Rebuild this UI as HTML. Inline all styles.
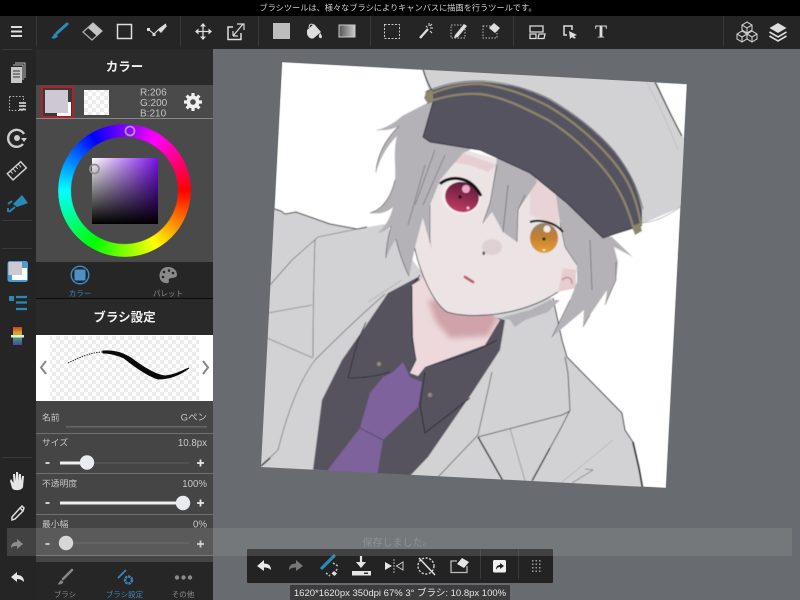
<!DOCTYPE html>
<html lang="ja"><head><meta charset="utf-8"><title>MediBang Paint</title>
<style>
html,body{margin:0;padding:0;width:800px;height:600px;overflow:hidden;background:#686c70}
svg{position:absolute;left:0;top:0}
#ui{filter:blur(.25px)}
text{font-family:"Liberation Sans","Noto Sans CJK JP",sans-serif}
#wheel{position:absolute;left:58px;top:124px;width:133px;height:133px;border-radius:50%;
background:conic-gradient(from 90deg,#f00,#ff0 60deg,#0f0 120deg,#0ff 180deg,#00f 240deg,#f0f 300deg,#f00 360deg);
-webkit-mask:radial-gradient(circle,transparent 53px,#000 54px,#000 66px,transparent 67px);mask:radial-gradient(circle,transparent 53px,#000 54px,#000 66px,transparent 67px)}
#sq{position:absolute;left:92px;top:158px;width:66px;height:66px;background:linear-gradient(to top,#000,rgba(0,0,0,0)),linear-gradient(to right,#fff,#7a10e8)}
</style></head><body>
<svg width="800" height="600" viewBox="0 0 800 600">
<defs>
<clipPath id="cv"><polygon points="282,62 687,84 666,488 261,467"/></clipPath>
<filter id="sf"><feGaussianBlur stdDeviation="0.4"/></filter>
<filter id="sb" x="-30%" y="-30%" width="160%" height="160%"><feGaussianBlur stdDeviation="3"/></filter>
<pattern id="chk" width="8" height="8" patternUnits="userSpaceOnUse"><rect width="8" height="8" fill="#fff"/><rect width="4" height="4" fill="#ececec"/><rect x="4" y="4" width="4" height="4" fill="#ececec"/></pattern>
<linearGradient id="ir1" x1="0" y1="0" x2="0" y2="1"><stop offset="0" stop-color="#5a1c3e"/><stop offset="1" stop-color="#c23a62"/></linearGradient>
<linearGradient id="ir2" x1="0" y1="0" x2="0" y2="1"><stop offset="0" stop-color="#8e8468"/><stop offset=".5" stop-color="#c8802c"/><stop offset="1" stop-color="#e2a13c"/></linearGradient>
</defs>
<rect width="800" height="600" fill="#686c70"/>
<g clip-path="url(#cv)" filter="url(#sf)">
<polygon points="282,62 687,84 666,488 261,467" fill="#fff"/>
<!-- hat crown -->
<path d="M421,66 L655,78 C664,100 680,132 690,150 L690,203 L642,224 L600,170 L500,100 L432,100 C428,88 424,76 421,66Z" fill="#d2d2d4"/>
<path d="M423,69 C426,80 430,88 434,94" fill="none" stroke="#222" stroke-width="1.200"/>
<path d="M655,82 C664,100 672,118 682,136" fill="none" stroke="#222" stroke-width="1.200"/>
<path d="M646,82 C660,105 672,135 678,150" fill="none" stroke="#b0b0b0" stroke-width=".5"/>
<path d="M642,223 C655,222 670,215 684,204" fill="none" stroke="#999" stroke-width=".6"/>
<!-- jacket -->
<path d="M273,208 L281,211 L285,214 L296,212 L330,224 L357,229 L385,224 L420,270 L500,312 L540,298 L552,298 L562,340 L567,357 L622,413 L625,430 L633,442 L643,490 L255,470Z" fill="#d2d2d4"/>
<path d="M272,208 L281,211 L285,214 L296,212 L330,224 L357,229 L367,227" fill="none" stroke="#222" stroke-width="1"/>
<path d="M553,298 L562,340 L567,357 L622,413 L625,430 L633,442" fill="none" stroke="#222" stroke-width="1"/>
<path d="M633,442 L639,468 L643,490" fill="none" stroke="#111" stroke-width="1.800"/>
<path d="M270,285 L292,260 L318,237 L362,228" fill="none" stroke="#555" stroke-width=".6"/>
<path d="M315,240 C314,270 313,320 313,357" fill="none" stroke="#555" stroke-width=".6"/>
<path d="M268,313 L312,305" fill="none" stroke="#555" stroke-width=".6"/>
<path d="M267,338 L313,358" fill="none" stroke="#555" stroke-width=".6"/>
<path d="M368,302 L402,280" fill="none" stroke="#888" stroke-width=".5"/>
<path d="M385,294 C355,320 330,345 315,360 C300,380 288,410 278,450 L261,466" fill="none" stroke="#555" stroke-width=".6"/>
<path d="M270,458 L261,466" stroke="#111" stroke-width="1.500"/>
<path d="M492,372 L478,435 L438,477" fill="none" stroke="#444" stroke-width=".7"/>
<path d="M565,357 L568,373 L570,410 L562,426 L532,481" fill="none" stroke="#333" stroke-width=".8"/>
<path d="M550,448 L532,481" fill="none" stroke="#111" stroke-width="1.300"/>
<path d="M478,437 L562,415 L570,411" fill="none" stroke="#333" stroke-width=".7"/>
<path d="M478,437 L490,458 L503,481" fill="none" stroke="#111" stroke-width="1.300"/>
<path d="M510,428 L525,481" fill="none" stroke="#666" stroke-width=".5"/>
<path d="M562,482 L613,440" fill="none" stroke="#999" stroke-width=".5"/>
<path d="M572,483 L593,470 L585,469" fill="none" stroke="#555" stroke-width=".6"/>
<!-- shirt -->
<path d="M418,277 L388,293 L365,327 L342,360 L322,400 L313,470 L408,478 L428,457 L472,393 L500,350 L505,320 L490,316 L440,312Z" fill="#57535e"/>
<path d="M420,275 L412,286 L412,337 M348,378 L358,340 L366,322 M348,378 C365,378 378,376 390,372" fill="none" stroke="#2a2830" stroke-width=".8"/>
<path d="M425,372 L420,405 L425,433 L470,398" fill="none" stroke="#2a2830" stroke-width=".9"/>
<path d="M425,367 C450,360 480,350 497,340" fill="none" stroke="#2a2830" stroke-width=".8"/>
<circle cx="379" cy="364" r="2.200" fill="#8f8a78"/><circle cx="430" cy="395" r="2.200" fill="#8f8a78"/>
<!-- tie -->
<path d="M403,362 L393,372 L383,377 L370,393 L360,428 L327,471 L377,476 L383,440 L418,407 L422,382 L410,377Z" fill="#7e629c"/>
<path d="M360,428 L383,440" fill="none" stroke="#3e3050" stroke-width=".7"/>
<!-- neck -->
<clipPath id="nk"><path d="M412,285 L413,337 L416,360 L410,373 L418,376 L425,367 L485,345 L500,320 L470,300 L428,275Z"/></clipPath>
<path d="M412,285 L413,337 L416,360 L410,373 L418,376 L425,367 L485,345 L500,320 L470,300 L428,275Z" fill="#edd9db"/>
<g clip-path="url(#nk)"><path d="M428,300 L436,322 L450,338 L488,336 L500,315 L470,300Z" fill="#cfa3a9" filter="url(#sb)"/></g>
<path d="M412,286 L412,337 L416,360 L410,372" fill="none" stroke="#2a2830" stroke-width=".8"/>
<!-- back hair -->
<path d="M500,318 L530,310 L550,300 L560,300 L548,312 L525,320 L515,327 L510,320Z" fill="#b4b2b7"/>
<!-- face -->
<path d="M413,236 C416,262 430,300 447,312 C470,319 520,317 558,292 L572,280 L578,270 L565,190 L520,165 L465,150 L430,190Z" fill="#ebe3e4"/>
<path d="M414,245 C419,270 432,302 447,312 C470,319 520,317 558,292" fill="none" stroke="#222" stroke-width=".8"/>
<path d="M463,153 L497,165 L488,172 L470,165 L450,162Z" fill="#e6cfd2"/>
<path d="M530,175 L560,195 L558,225 L530,215Z" fill="#e8d4d6"/>
<ellipse cx="492" cy="247" rx="10" ry="8" fill="#dfd0d2" filter="url(#sf)"/>
<path d="M422,215 L432,250 L428,226Z" fill="#d8a8ae"/>
<path d="M563,268 L576,270 L576,288 L558,292Z" fill="#e6cdcf"/>
<path d="M562,280 C568,275 572,278 572,284" fill="none" stroke="#c98f93" stroke-width="1.500"/>
<!-- left hair -->
<path d="M433,100 L402,116 C393,124 384,129 375,130 C386,131 394,129 399,126 C386,139 377,155 376,172 C381,155 390,143 397,136 C393,150 396,168 395,180 C391,197 383,209 370,213 C381,215 389,211 393,207 C390,219 384,229 377,233 C384,232 388,229 391,226 C388,238 386,248 386,258 C390,248 393,243 396,239 C399,252 404,266 409,277 L415,247 L423,217 L430,243 L430,205 L440,180 L463,153 L470,150 L480,130Z" fill="#b4b2b7"/>
<path d="M399,126 C386,139 377,155 376,172 M395,180 C391,197 383,209 370,213 M391,226 C388,238 386,248 386,258 M396,239 C399,252 404,266 409,276" fill="none" stroke="#555" stroke-width=".7"/>
<path d="M435,150 L415,205 M445,155 L423,205 M425,165 L408,225 M430,205 L430,243" fill="none" stroke="#66646b" stroke-width=".6"/>
<!-- bangs -->
<path d="M497,158 L490,203 L483,223 L492,212 L503,232 L517,242 L518,210 L537,182 L532,168Z" fill="#b4b2b7"/>
<path d="M497,165 L490,203 L483,223 M508,185 L503,232 M525,195 L518,210 L517,242" fill="none" stroke="#4d4b52" stroke-width=".6"/>
<!-- right hair -->
<path d="M555,188 L600,235 L612,237 L633,257 L614,247 L618,262 L616,280 L605,305 L607,290 L590,315 L583,327 L584,310 L552,337 L570,300 L577,282 L577,265 L565,247 L560,223Z" fill="#b4b2b7"/>
<path d="M560,223 L565,247 L577,265 M590,240 L592,290 M616,262 L616,280 L605,305 M590,315 L583,327 M570,300 L552,337" fill="none" stroke="#55535a" stroke-width=".6"/>
<!-- eyes -->
<ellipse cx="461" cy="197" rx="20" ry="17" transform="rotate(15 461 197)" fill="#f3eced"/>
<ellipse cx="462" cy="197" rx="17" ry="15" transform="rotate(15 462 197)" fill="url(#ir1)"/>
<circle cx="466" cy="189" r="4" fill="#f0a8c8"/><circle cx="460" cy="197" r="1.600" fill="#111"/><circle cx="468" cy="208" r="1.500" fill="#f3c2d0"/>
<path d="M440,184 C448,176 470,174 481,196" fill="none" stroke="#111" stroke-width="3"/>
<ellipse cx="544" cy="238" rx="14" ry="15" fill="url(#ir2)"/>
<circle cx="547" cy="229" r="3.600" fill="#f5e8dc"/><circle cx="544" cy="239" r="1.600" fill="#222"/><circle cx="544" cy="250" r="1.200" fill="#f7e7c8"/>
<path d="M530,222 C540,219 555,222 563,232" fill="none" stroke="#111" stroke-width="2.200"/>
<rect x="482.500" y="251.500" width="2.500" height="3.500" rx="1" fill="#5e4a4c"/>
<path d="M465,277 L473,282" stroke="#b65f63" stroke-width="2.800" stroke-linecap="round"/>
<!-- hat band -->
<path d="M425,93 C445,84 465,81 485,82 C510,84 530,90 550,100 C580,118 600,135 615,153 C630,172 638,190 642,210 L642,226 L603,238 L567,203 L530,173 L480,150 L430,142 L423,137 L433,102Z" fill="#575360"/>
<path d="M424,98 L427,90 L432,90 L434,101 L428,104Z" fill="#8d866a"/>
<path d="M426,96 C445,87 465,83 482,84 C510,88 530,97 548,106 C575,122 597,142 613,161 C627,178 636,195 641,225" fill="none" stroke="#8d866a" stroke-width="2.200"/>
<path d="M428,102 C445,96 462,93 480,94 C505,97 528,110 548,120 C575,137 595,158 607,173 C620,190 628,207 634,230" fill="none" stroke="#8d866a" stroke-width="2.200"/>
<path d="M632,226 L640,223 L642,231 L635,235Z" fill="#8d866a"/>
<path d="M425,92 C445,83 465,80 485,81 C510,83 530,89 550,99 C580,117 600,134 615,152 C630,171 638,189 643,209" fill="none" stroke="#2a2830" stroke-width=".6"/>
<path d="M433,102 L423,137 L430,142 L480,150 L530,173 L567,203 L603,238 L632,228" fill="none" stroke="#2a2830" stroke-width=".9"/>
</g>
<!-- chrome -->
<rect width="800" height="16" fill="#000"/>
<rect y="16" width="800" height="33" fill="#252525"/>
<rect y="16" width="36" height="584" fill="#252525"/>
<rect x="36" y="49" width="177" height="36" fill="#2a2a2a"/>
<rect x="36" y="85" width="177" height="177" fill="#4a4a4a"/>
<rect x="36" y="118" width="177" height="1" fill="#888"/>
<rect x="36" y="262" width="177" height="36" fill="#262626"/>
<rect x="36" y="298" width="177" height="1" fill="#0c0c0c"/>
<rect x="36" y="299" width="177" height="36" fill="#292929"/>
<rect x="36" y="335" width="177" height="66" fill="#fff"/>
<rect x="50" y="336" width="149" height="64" fill="url(#chk)"/>
<rect x="36" y="401" width="177" height="161" fill="#454545"/>
<rect x="36" y="562" width="177" height="38" fill="#262626"/>
</svg>
<div id="wheel"></div><div id="sq"></div>
<svg id="ui" width="800" height="600" viewBox="0 0 800 600">
<text x="398" y="10.500" text-anchor="middle" font-size="8.200" fill="#d0d0d0">ブラシツールは、様々なブラシによりキャンバスに描画を行うツールです。</text>
<!-- separators -->
<g fill="#3a3a3a">
<rect x="36" y="16" width="1" height="30"/><rect x="180" y="16" width="1" height="30"/><rect x="258" y="16" width="1" height="30"/><rect x="370" y="16" width="1" height="30"/><rect x="513" y="16" width="1" height="30"/><rect x="723" y="16" width="1" height="30"/>
<rect x="2" y="49" width="30" height="1"/><rect x="2" y="220" width="30" height="1"/><rect x="2" y="248" width="30" height="1"/><rect x="2" y="457" width="30" height="1"/>
</g>
<!-- top icons -->
<path d="M11,27h11M11,31.500h11M11,36h11" stroke="#ddd" stroke-width="2"/>
<path d="M67,24 L57,33" stroke="#2a8ab5" stroke-width="3" stroke-linecap="round"/><path d="M55,33 L58,36 C56,39 53,39 51,38 C53,37 53,35 55,33Z" fill="#2a8ab5"/>
<path d="M93,23 L102,31 L92,40 L83,32Z" fill="none" stroke="#aaa" stroke-width="1.300"/><path d="M93,23 L102,31 L97,36 L88,28Z" fill="#c4c4c4"/>
<rect x="117.500" y="24.500" width="14" height="14" fill="none" stroke="#ddd" stroke-width="1.500"/>
<path d="M148,29 L154,34 L159,29 L166,24" fill="none" stroke="#ddd" stroke-width="1.100"/><g fill="#ddd"><rect x="147" y="28" width="3" height="3"/><rect x="152.500" y="33" width="3" height="3"/><path d="M158,30 L165,24 L167,26 L161,33Z"/></g>
<path d="M203,25v13M196.500,31.500h13" stroke="#ddd" stroke-width="1.300"/><path d="M203,23l-3,3.500h6ZM203,40l-3,-3.500h6ZM195,31.500l3.500,-3v6ZM212,31.500l-3.500,-3v6Z" fill="#ddd"/>
<path d="M233,27 H228 V39.500 H241 V33" fill="none" stroke="#ddd" stroke-width="1.500"/><path d="M233,36 L243,24 M237,24 H244 V30 M233,36 V31 M233,36 H238" fill="none" stroke="#ddd" stroke-width="1.200"/>
<rect x="273" y="23" width="17" height="16" fill="#bdbdbd"/>
<path d="M307,30 L314,24 L321,32 L314,38 C311,40 308,37 307,34Z" fill="#ddd"/><path d="M309,28 C309,23 313,23 314,27" fill="none" stroke="#ddd"/><path d="M320,33 C323,36 322,39 320,38 C318,37 319,35 320,33Z" fill="#ddd"/>
<defs><linearGradient id="g1"><stop offset="0" stop-color="#555"/><stop offset="1" stop-color="#ccc"/></linearGradient></defs>
<rect x="339" y="25" width="16" height="12" fill="url(#g1)" stroke="#ccc"/>
<rect x="384.500" y="24.500" width="15" height="14" fill="none" stroke="#ccc" stroke-dasharray="2 1.500"/>
<path d="M420,38 L428,29" stroke="#ddd" stroke-width="2.400"/><path d="M429,23v3M433,28h-3M426,26l1.500,1.500M432,24l-2,2M432,33l-2,-2" stroke="#ddd" stroke-width="1"/>
<rect x="451" y="25" width="14" height="13" fill="none" stroke="#bbb" stroke-dasharray="1.500 1.500"/><path d="M455,35 L464,24 L467,26 L458,37 L454,38Z" fill="#ddd"/>
<rect x="483" y="26" width="14" height="12" fill="none" stroke="#bbb" stroke-dasharray="1.500 1.500"/><path d="M494,23 L500,28 L495,33 L489,28Z" fill="#ddd"/>
<path d="M530,26h13v6h-13ZM530,34h6v4.500h-6ZM539,34h6l-1,4.500h-6Z" fill="none" stroke="#ddd" stroke-width="1.300"/>
<path d="M567,35 H564 V26 H572 V30" fill="none" stroke="#ddd" stroke-width="1.500"/><path d="M569,31 L577,35 L574,36 L576,38 L574,38.500 L572,37 L570,39Z" fill="#ddd"/>
<text x="601" y="37.500" text-anchor="middle" font-size="18" font-weight="bold" fill="#ddd" style='font-family:"Liberation Serif",serif'>T</text>
<g fill="none" stroke="#ccc" stroke-width="1.100"><path d="M747,22 L752,25 V30 L747,33 L742,30 V25Z M742,25 L747,28 L752,25 M747,28V33"/><path d="M742,31 L747,34 V39 L742,42 L737,39 V34Z M737,34 L742,37 L747,34 M742,37V42"/><path d="M752,31 L757,34 V39 L752,42 L747,39 V34Z M747,34 L752,37 L757,34 M752,37V42"/></g>
<path d="M778,23 L786.500,28 L778,33 L769.500,28Z" fill="#ddd"/><path d="M769.500,32 L778,37 L786.500,32 M769.500,36 L778,41 L786.500,36" fill="none" stroke="#ddd" stroke-width="1.600"/>
<!-- left rail -->
<rect x="11" y="67" width="11" height="16" fill="#c8c8c8"/><path d="M13,65h10v15M15,63h10v15" fill="none" stroke="#bbb"/><path d="M13,71h7M13,74h7M13,77h7" stroke="#333"/>
<rect x="9.500" y="96.500" width="14" height="14" fill="none" stroke="#bbb" stroke-dasharray="1.500 1.700"/><path d="M19,103h7M19,106h7M19,109.500h7" stroke="#ccc" stroke-width="1.800"/>
<path d="M23,144 A8.500,8.500 0 1 1 24,134" fill="none" stroke="#ccc" stroke-width="2.400"/><path d="M27,138l-3,4l-3,-4Z" fill="#ccc"/><circle cx="17" cy="138" r="3" fill="#ccc"/>
<g transform="rotate(-42 17 171)"><rect x="8" y="166.500" width="18" height="8.500" fill="none" stroke="#ccc" stroke-width="1.500"/><path d="M12,167v3M15.500,167v4M19,167v3M22.500,167v4" stroke="#ccc"/></g>
<path d="M22,195 L28,203 L17,207 L13,204Z" fill="#2a8ab5"/><path d="M9,212 L15,207 M8,204 L12,201 M8,208 L8,212" stroke="#2a8ab5" stroke-width="1.800"/>
<rect x="7.500" y="261" width="20.500" height="21" rx="2.500" fill="#4d9bd2"/><rect x="12" y="268" width="15" height="12" fill="#fff"/><rect x="8.500" y="262" width="13.500" height="13" fill="#cec8d2"/>
<rect x="9" y="296" width="5" height="5" fill="#2a8ab5"/><path d="M16,297h11M16,302.500h11M16,309h11" stroke="#2a8ab5" stroke-width="2.200"/>
<defs><linearGradient id="g2" x1="0" y1="0" x2="0" y2="1"><stop offset="0" stop-color="#c8402a"/><stop offset=".35" stop-color="#d8b020"/><stop offset=".6" stop-color="#40a060"/><stop offset="1" stop-color="#5040b0"/></linearGradient></defs>
<rect x="13" y="327" width="9" height="18" fill="url(#g2)"/><rect x="11" y="335" width="13" height="2.500" fill="#e8e8e8"/>
<path d="M10,481 L12,488 C13,491 22,491 23,487 L24,476 L22,476 L21,481 L21,474 L19,474 L19,481 L18,472 L16,472 L16,481 L15,474 L13,474 L13.500,483 L11,479Z" fill="#e6e6e6"/>
<path d="M12,517 L20,508 L23,511 L15,519 L12,520Z M20,508 L22,506 L24,508 L23,511" fill="none" stroke="#ddd" stroke-width="1.500"/>
<path d="M23,544 L17,539 V542 C13,542 11,544 11,548 C13,546 15,546 17,546 V549Z" fill="#888"/>
<path d="M11,577 L17,572 V575 C21,575 24,577 24,582 C22,580 20,579 17,579 V582Z" fill="#e6e6e6"/>
<!-- colour panel -->
<text x="124.500" y="71" text-anchor="middle" font-size="12.500" font-weight="bold" fill="#f0f0f0">カラー</text>
<rect x="42" y="87" width="31" height="30" fill="#3a3a3a" stroke="#b82028" stroke-width="1.800"/>
<rect x="57" y="102" width="14" height="14" fill="#fff"/>
<rect x="45" y="90" width="23" height="23" fill="#cec8d2"/>
<rect x="84" y="90" width="25" height="25" fill="url(#chk)"/>
<g font-size="10" fill="#c4c4c4"><text x="140" y="95.500">R:206</text><text x="140" y="106">G:200</text><text x="140" y="116.500">B:210</text></g>
<g fill="#f0f0f0"><circle cx="193" cy="102" r="6.500"/><g stroke="#f0f0f0" stroke-width="3.200"><path d="M193,93v18M184,102h18M186.600,95.600l12.800,12.800M199.400,95.600l-12.800,12.800"/></g></g><circle cx="193" cy="102" r="2.800" fill="#4a4a4a"/>
<circle cx="130" cy="131" r="4.500" fill="none" stroke="#a898b0" stroke-width="1.800"/>
<circle cx="94.500" cy="169" r="4.500" fill="none" stroke="#8f8f8f" stroke-width="1.800"/>
<!-- tabs -->
<circle cx="80" cy="275" r="8.800" fill="none" stroke="#3e87b8" stroke-width="1.500"/><rect x="74.500" y="269.500" width="11" height="11" rx="1.500" fill="#4a92c8"/>
<text x="80" y="296" text-anchor="middle" font-size="7.500" fill="#3e87b8">カラー</text>
<path d="M168,267 C162,267 159.500,272 159.500,276 C159.500,281 164,284 168,283 C170,282 168,280 169,279 C171,277 176.500,279 177,275 C177,270 173,267 168,267Z" fill="#8a8a8a"/><g fill="#262626"><circle cx="164" cy="272" r="1.300"/><circle cx="169" cy="270.500" r="1.300"/><circle cx="173" cy="273" r="1.300"/><circle cx="163" cy="277" r="1.300"/></g>
<text x="168" y="296" text-anchor="middle" font-size="7.500" fill="#8a8a8a">パレット</text>
<text x="124.500" y="321.500" text-anchor="middle" font-size="12.500" font-weight="bold" fill="#f0f0f0">ブラシ設定</text>
<!-- brush preview -->
<path d="M68,363 C80,357 92,352 103,352" fill="none" stroke="#333" stroke-width="1" stroke-dasharray="1.500 1"/>
<path d="M103,351 C115,350 125,353 135,361 C146,369 156,375 165,376 C175,375 182,371 189,368 C180,375 170,379 158,379 C146,375 134,366 124,358 C115,354 108,353 103,353Z" fill="#0a0a0a" stroke="#0a0a0a" stroke-width="1"/>
<path d="M46,361 L41,367.500 L46,374" fill="none" stroke="#888" stroke-width="2"/><path d="M203,361 L208,367.500 L203,374" fill="none" stroke="#888" stroke-width="2"/>
<!-- params -->
<g fill="#c8c8c8">
<text x="42" y="420.500" font-size="8.800">名前</text><text x="207" y="420.500" text-anchor="end" font-size="9.500">Gペン</text>
<text x="42" y="445.500" font-size="8.800">サイズ</text><text x="207" y="446" text-anchor="end" font-size="9.700">10.8px</text>
<text x="42" y="486.500" font-size="8.800">不透明度</text><text x="207" y="487" text-anchor="end" font-size="9.700">100%</text>
<text x="42" y="527" font-size="8.800">最小幅</text><text x="207" y="527.500" text-anchor="end" font-size="9.700">0%</text>
</g>
<rect x="66" y="426" width="141" height="1.500" fill="#666"/>
<g fill="#707070"><rect x="36" y="433" width="177" height="1"/><rect x="36" y="473" width="177" height="1"/><rect x="36" y="514" width="177" height="1"/><rect x="36" y="555" width="177" height="1"/></g>
<g fill="#525252"><rect x="60" y="462" width="129" height="2"/><rect x="60" y="542" width="129" height="2"/></g>
<rect x="60" y="461.500" width="27" height="3" fill="#f0f0f0"/><rect x="60" y="501.500" width="123" height="3" fill="#f0f0f0"/>
<circle cx="87" cy="462.500" r="7.200" fill="#e9ebee"/><circle cx="183" cy="503" r="7.200" fill="#e9ebee"/><circle cx="66" cy="543" r="7.200" fill="#e9ebee"/>
<g stroke="#e6e6e6" stroke-width="1.800"><path d="M45.500,463h4M45.500,503h4M45.500,544h4M197,463h7M200.500,459.500v7M197,503h7M200.500,499.500v7M197,544h7M200.500,540.500v7"/></g>
<!-- bottom tabs -->
<path d="M72,570 L63,579" stroke="#888" stroke-width="2.600" stroke-linecap="round"/><path d="M61,580 L63.500,582 C62,584.500 59,585 57.500,584 C59,583.500 59.500,581.500 61,580Z" fill="#888"/>
<text x="65" y="597" text-anchor="middle" font-size="7.500" fill="#8a8a8a">ブラシ</text>
<path d="M126,570 L118,578" stroke="#3e87b8" stroke-width="1.800"/><circle cx="128.500" cy="580" r="3.500" fill="none" stroke="#3e87b8" stroke-width="2.400" stroke-dasharray="2.400 .8"/>
<text x="124.500" y="597" text-anchor="middle" font-size="7.500" fill="#3e87b8">ブラシ設定</text>
<g fill="#8a8a8a"><circle cx="177" cy="577.500" r="2.200"/><circle cx="183.500" cy="577.500" r="2.200"/><circle cx="190" cy="577.500" r="2.200"/></g>
<text x="183" y="597" text-anchor="middle" font-size="7.500" fill="#8a8a8a">その他</text>
<!-- bottom toolbar -->
<rect x="247" y="549" width="306" height="34" rx="1" fill="#232323"/>
<path d="M257,566 L264,560 V563.500 C268,563.500 271,565 271,570 C269,568 267,567.500 264,567.500 V571Z" fill="#e8e8e8"/>
<path d="M303,566 L296,560 V563.500 C292,563.500 289,565 289,570 C291,568 293,567.500 296,567.500 V571Z" fill="#777"/>
<path d="M334,556 L322,568" stroke="#2a8ab5" stroke-width="3.200" stroke-linecap="round"/>
<path d="M333,563 L338,566 M326,573 L330,576 M337,569 L334,575" stroke="#bbb" stroke-width="1.600" stroke-dasharray="2 1.500" fill="none"/><path d="M334,571l3,2.500 l-2.500,2.500 l-3,-2.500Z" fill="#ddd"/>
<path d="M361,556 V565" stroke="#e6e6e6" stroke-width="2.200"/><path d="M356,562 H366 L361,568Z" fill="#e6e6e6"/><rect x="352" y="571" width="19" height="4.500" fill="#e6e6e6"/><rect x="364" y="572.500" width="4" height="1.500" fill="#333"/>
<path d="M385,562 V570 L392,566Z" fill="#e6e6e6"/><path d="M394,559 V574" stroke="#aaa" stroke-dasharray="2 1"/><path d="M403,562 V570 L396.500,566Z" fill="none" stroke="#ccc"/>
<circle cx="426" cy="566" r="8" fill="none" stroke="#ccc" stroke-width="1.400" stroke-dasharray="2.200 1.500"/><path d="M419,558 L435,575" stroke="#ddd" stroke-width="1.600"/>
<path d="M457,561 H451 V572.500 H467 V566" fill="none" stroke="#bbb" stroke-width="1.300"/><path d="M462,558 L469,562 L464,568 L457,564Z" fill="#e6e6e6"/>
<rect x="480" y="549" width="1" height="30" fill="#3a3a3a"/><rect x="518" y="549" width="1" height="30" fill="#3a3a3a"/>
<rect x="493" y="560" width="13" height="12.500" rx="1.500" fill="#f0f0f0"/><path d="M496,570 C496,566 498,565 500,565 V563 L504,566 L500,569 V567 C498,567 497,568 496,570Z" fill="#222"/>
<g fill="#999"><rect x="532" y="560" width="1.500" height="1.500"/><rect x="535.500" y="560" width="1.500" height="1.500"/><rect x="539" y="560" width="1.500" height="1.500"/><rect x="532" y="563.500" width="1.500" height="1.500"/><rect x="535.500" y="563.500" width="1.500" height="1.500"/><rect x="539" y="563.500" width="1.500" height="1.500"/><rect x="532" y="567" width="1.500" height="1.500"/><rect x="535.500" y="567" width="1.500" height="1.500"/><rect x="539" y="567" width="1.500" height="1.500"/><rect x="532" y="570.500" width="1.500" height="1.500"/><rect x="535.500" y="570.500" width="1.500" height="1.500"/><rect x="539" y="570.500" width="1.500" height="1.500"/></g>
<!-- toast -->
<rect x="7" y="528" width="785" height="28" fill="#9a9a9a" fill-opacity=".25"/>
<text x="397.500" y="546" text-anchor="middle" font-size="10" fill="#8f9295">保存しました。</text>
<!-- status -->
<rect x="290" y="585" width="220" height="15" fill="#3c3c3c"/>
<text x="400" y="596" text-anchor="middle" font-size="9.500" fill="#e6e6e6">1620*1620px 350dpi 67% 3° ブラシ: 10.8px 100%</text>
</svg>
</body></html>
